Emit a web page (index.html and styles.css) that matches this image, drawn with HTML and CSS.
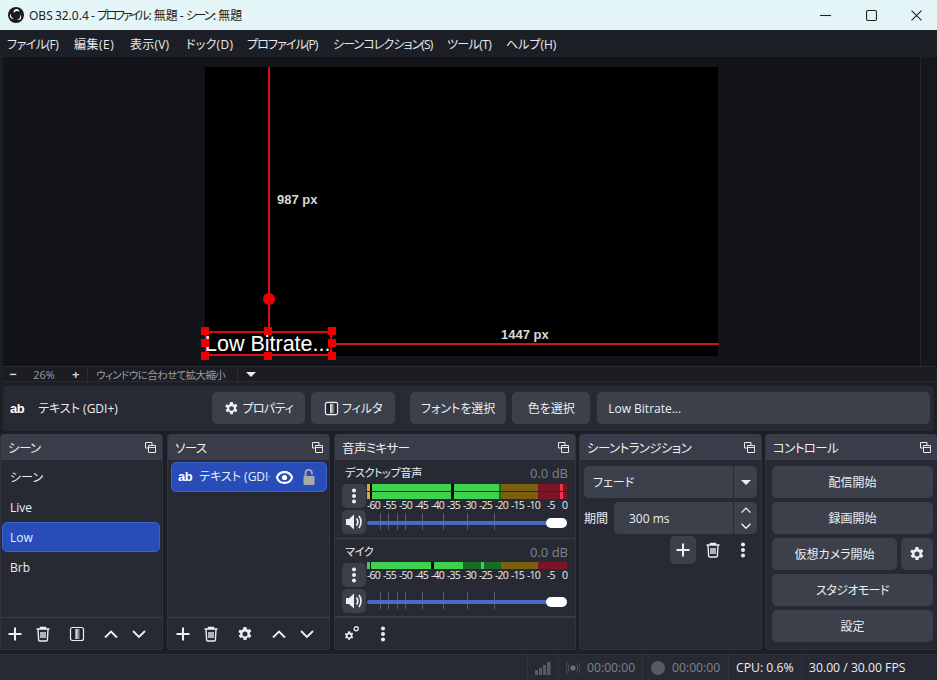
FILE: index.html
```html
<!DOCTYPE html>
<html lang="ja">
<head>
    <meta charset="UTF-8">
    <title>OBS 32.0.4</title>
    <link rel="stylesheet" href="styles.css">
</head>
<body>

<svg class="defs" width="0" height="0">
    <symbol id="i-plus" viewBox="0 0 16 16"><path d="M8 1.500v13M1.500 8h13" stroke="currentColor" stroke-width="2" fill="none"/></symbol>
    <symbol id="i-trash" viewBox="0 0 16 16"><path d="M1.500 3h13M5.500 3V1.500h5V3M3 3.500l.6 10.200c0 .8.6 1.300 1.300 1.300h6.200c.7 0 1.300-.5 1.300-1.300L13 3.500M6 6v6M8 6v6M10 6v6" stroke="currentColor" stroke-width="1.400" fill="none"/></symbol>
    <symbol id="i-up" viewBox="0 0 16 16"><path d="M2 11.500l6-6 6 6" stroke="currentColor" stroke-width="1.800" fill="none"/></symbol>
    <symbol id="i-down" viewBox="0 0 16 16"><path d="M2 5l6 6 6-6" stroke="currentColor" stroke-width="1.800" fill="none"/></symbol>
    <symbol id="i-gear" viewBox="0 0 16 16"><path fill-rule="evenodd" fill="currentColor" d="M6.600 1h2.800l.4 2 1.200.7 1.900-.7 1.400 2.400-1.500 1.400v1.400l1.500 1.400-1.400 2.400-1.900-.7-1.200.7-.4 2H6.600l-.4-2-1.200-.7-1.900.7-1.400-2.400 1.500-1.400V7.300L1.300 5.900l1.400-2.400 1.900.7 1.200-.7zM8 5.500a2.500 2.500 0 1 0 0 5 2.500 2.500 0 0 0 0-5z"/></symbol>
    <symbol id="i-dots" viewBox="0 0 16 16"><circle cx="8" cy="2.500" r="2" fill="currentColor"/><circle cx="8" cy="8" r="2" fill="currentColor"/><circle cx="8" cy="13.500" r="2" fill="currentColor"/></symbol>
    <symbol id="i-filter" viewBox="0 0 16 16"><defs><linearGradient id="fade"><stop offset="0" stop-color="#fff"/><stop offset="1" stop-color="#333"/></linearGradient></defs><rect x="1.500" y="1.500" width="13" height="13" rx="2" fill="none" stroke="currentColor" stroke-width="1.200"/><rect x="3" y="3" width="3.500" height="10" fill="#22242b"/><rect x="6.500" y="3" width="5" height="10" fill="url(#fade)"/><rect x="11.500" y="3" width="1.500" height="10" fill="#22242b"/></symbol>
    <symbol id="i-float" viewBox="0 0 11 11"><path d="M.5.5h6.500v2.500M.5.5v5.500H3M3.500 3.500h7v7h-7zM3.500 5.500h7" stroke="currentColor" fill="none"/></symbol>
    <symbol id="i-speaker" viewBox="0 0 18 18"><path d="M1 6h3l5-4.500v15L4 12H1z" fill="currentColor"/><path d="M11.500 5.500c1.500 2 1.500 5 0 7M14 3c2.600 3.500 2.600 8.500 0 12" stroke="currentColor" stroke-width="1.700" fill="none"/></symbol>
</svg>

<header class="titlebar">
    <svg class="obs-logo" viewBox="0 0 16 16" width="16" height="16">
        <circle cx="8" cy="8" r="8" fill="#1b1b1e"/>
        <path d="M8.300 1.900a3.500 3.500 0 0 1 3.300 3 4 4 0 0 0-5.900 1.100A3.500 3.500 0 0 1 8.300 1.900zM2.700 11a3.500 3.500 0 0 1 .3-4.500 4 4 0 0 0 3 5.200 3.500 3.500 0 0 1-3.300-.7zM13.200 10.900a3.500 3.500 0 0 1-4.200 2 4 4 0 0 0 3-5.300 3.500 3.500 0 0 1 1.200 3.300z" fill="#fff"/>
    </svg>
    <span class="title-text">OBS 32.0.4 - <span class="kana">プロファイル</span>: 無題 - <span class="kana">シーン</span>: 無題</span>
    <div class="win-buttons">
        <svg viewBox="0 0 10 10" width="11" height="11"><path d="M0 5h10" stroke="#222" fill="none"/></svg>
        <svg viewBox="0 0 10 10" width="11" height="11"><rect x=".5" y=".5" width="9" height="9" rx="1" stroke="#222" fill="none"/></svg>
        <svg viewBox="0 0 10 10" width="11" height="11"><path d="M.5.5l9 9M9.500.5l-9 9" stroke="#222" fill="none"/></svg>
    </div>
</header>

<nav class="menubar">
    <span class="m-file">ファイル(F)</span>
    <span class="m-edit">編集(E)</span>
    <span class="m-view">表示(V)</span>
    <span class="m-dock">ドック(D)</span>
    <span class="m-prof">プロファイル(P)</span>
    <span class="m-coll">シーンコレクション(S)</span>
    <span class="m-tool">ツール(T)</span>
    <span class="m-help">ヘルプ(H)</span>
</nav>

<section class="preview">
    <div class="canvas">
        <div class="guide-v"></div>
        <div class="guide-h"></div>
        <div class="rotate-handle"></div>
        <span class="measure measure-v">987 px</span>
        <span class="measure measure-h">1447 px</span>
        <div class="selection">
            <span class="source-text">Low Bitrate...</span>
            <i class="handle h-tl"></i><i class="handle h-tc"></i><i class="handle h-tr"></i>
            <i class="handle h-ml"></i><i class="handle h-mr"></i>
            <i class="handle h-bl"></i><i class="handle h-bc"></i><i class="handle h-br"></i>
        </div>
    </div>
    <div class="scroll-v"></div>
</section>

<div class="zoombar">
    <span class="zoom-btn">−</span>
    <span class="zoom-val">26%</span>
    <span class="zoom-btn zoom-plus">+</span>
    <span class="zoom-fit">ウィンドウに合わせて拡大縮小</span>
    <span class="zoom-arrow"></span>
</div>

<div class="contextbar">
    <span class="ab-icon">ab</span>
    <span class="context-name">テキスト (GDI+)</span>
    <button class="btn btn-props"><svg width="15" height="15"><use href="#i-gear"/></svg><span class="kana-soft">プロパティ</span></button>
    <button class="btn btn-filter"><svg width="15" height="15"><use href="#i-filter"/></svg>フィルタ</button>
    <button class="btn btn-font">フォントを選択</button>
    <button class="btn btn-color">色を選択</button>
    <div class="btn text-field">Low Bitrate...</div>
</div>

<main class="docks">
    <section class="dock dock-scenes">
        <div class="dock-title">シーン<svg width="11" height="11"><use href="#i-float"/></svg></div>
        <ul class="list">
            <li>シーン</li>
            <li>Live</li>
            <li class="selected">Low</li>
            <li>Brb</li>
        </ul>
        <div class="dock-tools">
            <svg width="16" height="16"><use href="#i-plus"/></svg>
            <svg width="16" height="16"><use href="#i-trash"/></svg>
            <svg width="16" height="16"><use href="#i-filter"/></svg>
            <svg width="16" height="16"><use href="#i-up"/></svg>
            <svg width="16" height="16"><use href="#i-down"/></svg>
        </div>
    </section>

    <section class="dock dock-sources">
        <div class="dock-title">ソース<svg width="11" height="11"><use href="#i-float"/></svg></div>
        <ul class="list">
            <li class="selected source-row">
                <span class="ab-icon">ab</span>
                <span class="source-name">テキスト (GDI+)</span>
                <svg class="eye" viewBox="0 0 18 14" width="17" height="13"><path d="M9 1.200C5 1.200 2 3.500.8 7 2 10.500 5 12.800 9 12.800s7-2.300 8.200-5.800C16 3.500 13 1.200 9 1.200z" fill="none" stroke="#fff" stroke-width="2.200"/><circle cx="9" cy="7" r="2.800" fill="#fff"/></svg>
                <svg class="lock" viewBox="0 0 12 16" width="12" height="16"><path d="M2.500 7V4a3.200 3.200 0 0 1 6.400 0v1.500" fill="none" stroke="#aaa" stroke-width="1.800"/><rect x="0.500" y="7" width="11" height="9" rx="1" fill="#aaa"/></svg>
            </li>
        </ul>
        <div class="dock-tools">
            <svg width="16" height="16"><use href="#i-plus"/></svg>
            <svg width="16" height="16"><use href="#i-trash"/></svg>
            <svg width="16" height="16"><use href="#i-gear"/></svg>
            <svg width="16" height="16"><use href="#i-up"/></svg>
            <svg width="16" height="16"><use href="#i-down"/></svg>
        </div>
    </section>

    <section class="dock dock-mixer">
        <div class="dock-title">音声ミキサー<svg width="11" height="11"><use href="#i-float"/></svg></div>
        <div class="mixer-strip">
            <div class="strip-head"><span>デスクトップ音声</span><span class="db">0.0 dB</span></div>
            <div class="strip-row">
                <span class="icon-btn"><svg width="16" height="16"><use href="#i-dots"/></svg></span>
                <div class="meter">
                    <div class="channel">
                        <i class="seg" style="width:3px;background:#e0a82e"></i><i class="seg" style="width:2px;background:#000"></i>
                        <i class="seg" style="width:79px;background:#3fd24e"></i><i class="seg" style="width:3px;background:#000"></i>
                        <i class="seg" style="width:45px;background:#3fd24e"></i><i class="seg" style="width:2px;background:#1a6b24"></i>
                        <i class="seg" style="width:37px;background:#7a6010"></i><i class="seg" style="width:22px;background:#7d1426"></i>
                        <i class="seg" style="width:3px;background:#e8384f"></i><i class="seg" style="width:4px;background:#7d1426"></i>
                    </div>
                    <div class="channel">
                        <i class="seg" style="width:3px;background:#e0a82e"></i><i class="seg" style="width:2px;background:#000"></i>
                        <i class="seg" style="width:79px;background:#3fd24e"></i><i class="seg" style="width:3px;background:#000"></i>
                        <i class="seg" style="width:45px;background:#3fd24e"></i><i class="seg" style="width:2px;background:#1a6b24"></i>
                        <i class="seg" style="width:37px;background:#7a6010"></i><i class="seg" style="width:22px;background:#7d1426"></i>
                        <i class="seg" style="width:3px;background:#e8384f"></i><i class="seg" style="width:4px;background:#7d1426"></i>
                    </div>
                    <div class="scale"><span>-60</span><span>-55</span><span>-50</span><span>-45</span><span>-40</span><span>-35</span><span>-30</span><span>-25</span><span>-20</span><span>-15</span><span>-10</span><span>-5</span><span>0</span></div>
                </div>
            </div>
            <div class="strip-row">
                <span class="icon-btn"><svg width="18" height="18"><use href="#i-speaker"/></svg></span>
                <div class="slider">
                    <i class="tick" style="left:13px"></i><i class="tick" style="left:21px"></i><i class="tick" style="left:30px"></i><i class="tick" style="left:38px"></i><i class="tick" style="left:55px"></i><i class="tick" style="left:76px"></i><i class="tick" style="left:100px"></i><i class="tick" style="left:127px"></i>
                    <div class="track"></div><div class="knob"></div>
                </div>
            </div>
        </div>
        <div class="mixer-strip mixer-strip-mic">
            <div class="strip-head"><span>マイク</span><span class="db">0.0 dB</span></div>
            <div class="strip-row">
                <span class="icon-btn"><svg width="16" height="16"><use href="#i-dots"/></svg></span>
                <div class="meter meter-mono">
                    <div class="channel">
                        <i class="seg" style="width:3px;background:#3fd24e"></i><i class="seg" style="width:1px;background:#000"></i>
                        <i class="seg" style="width:60px;background:#3fd24e"></i><i class="seg" style="width:3px;background:#000"></i>
                        <i class="seg" style="width:29px;background:#3fd24e"></i><i class="seg" style="width:18px;background:#1a6b24"></i>
                        <i class="seg" style="width:3px;background:#3fd24e"></i><i class="seg" style="width:17px;background:#1a6b24"></i>
                        <i class="seg" style="width:37px;background:#7a6010"></i><i class="seg" style="width:29px;background:#7d1426"></i>
                    </div>
                    <div class="scale"><span>-60</span><span>-55</span><span>-50</span><span>-45</span><span>-40</span><span>-35</span><span>-30</span><span>-25</span><span>-20</span><span>-15</span><span>-10</span><span>-5</span><span>0</span></div>
                </div>
            </div>
            <div class="strip-row">
                <span class="icon-btn"><svg width="18" height="18"><use href="#i-speaker"/></svg></span>
                <div class="slider">
                    <i class="tick" style="left:13px"></i><i class="tick" style="left:21px"></i><i class="tick" style="left:30px"></i><i class="tick" style="left:38px"></i><i class="tick" style="left:55px"></i><i class="tick" style="left:76px"></i><i class="tick" style="left:100px"></i><i class="tick" style="left:127px"></i>
                    <div class="track"></div><div class="knob"></div>
                </div>
            </div>
        </div>
        <div class="dock-tools mixer-tools">
            <svg viewBox="0 0 16 16" width="15" height="15"><use href="#i-gear" width="11" height="11" y="5"/><circle cx="13" cy="3" r="2.200" fill="none" stroke="currentColor" stroke-width="1.400"/></svg>
            <svg width="16" height="16"><use href="#i-dots"/></svg>
        </div>
    </section>

    <section class="dock dock-trans">
        <div class="dock-title">シーントランジション<svg width="11" height="11"><use href="#i-float"/></svg></div>
        <div class="trans-body">
            <div class="btn combo"><span>フェード</span><span class="combo-arrow"><i class="caret"></i></span></div>
            <div class="trans-row">
                <label>期間</label>
                <div class="btn spin">
                    <span>300 ms</span>
                    <span class="spin-arrows">
                        <svg width="12" height="12"><use href="#i-up"/></svg>
                        <svg width="12" height="12"><use href="#i-down"/></svg>
                    </span>
                </div>
            </div>
            <div class="trans-tools">
                <span class="btn plus-btn"><svg width="16" height="16"><use href="#i-plus"/></svg></span>
                <svg class="t-trash" width="16" height="16"><use href="#i-trash"/></svg>
                <svg class="t-dots" width="16" height="16"><use href="#i-dots"/></svg>
            </div>
        </div>
    </section>

    <section class="dock dock-controls">
        <div class="dock-title">コントロール<svg width="11" height="11"><use href="#i-float"/></svg></div>
        <div class="controls">
            <button class="btn">配信開始</button>
            <button class="btn">録画開始</button>
            <div class="controls-row">
                <button class="btn">仮想カメラ開始</button>
                <button class="btn cam-gear"><svg width="16" height="16"><use href="#i-gear"/></svg></button>
            </div>
            <button class="btn"><span class="kana-soft">スタジオモード</span></button>
            <button class="btn">設定</button>
        </div>
    </section>
</main>

<footer class="statusbar">
    <div class="stat stat-signal">
        <svg width="16" height="14" viewBox="0 0 16 14"><path fill="#565a66" d="M0 9h3v5H0zM4 7h3v7H4zM8 4h3v10H8zM12 1h3.500v13H12z"/></svg>
    </div>
    <div class="stat stat-stream dim">
        <svg width="14" height="12" viewBox="0 0 14 12"><circle cx="7" cy="6" r="2.500" fill="#6c707c"/><path d="M3.500 2.500a5 5 0 0 0 0 7M10.500 2.500a5 5 0 0 1 0 7M1.500 1a7.500 7.500 0 0 0 0 10M12.500 1a7.500 7.500 0 0 1 0 10" fill="none" stroke="#565a66"/></svg>
        00:00:00
    </div>
    <div class="stat stat-rec dim"><i class="rec-dot"></i>00:00:00</div>
    <div class="stat stat-cpu">CPU: 0.6%</div>
    <div class="stat stat-fps">30.00 / 30.00 FPS</div>
</footer>

</body>
</html>
```

FILE: styles.css
```css
* {
    box-sizing: border-box;
}
html, body {
    margin: 0;
    height: 680px;
    overflow: hidden;
}
body {
    width: 937px;
    background-color: #1d1f26;
    color: #eceef2;
    font-family: "Open Sans", "Noto Sans CJK JP", sans-serif;
    font-size: 12px;
    font-feature-settings: "palt";
}
.defs {
    position: absolute;
}
svg {
    display: block;
    flex: none;
}
.kana-soft {
    letter-spacing: -0.6px;
}

/* title bar */
.titlebar {
    height: 30px;
    background-color: #e4f5f8;
    color: #222;
    display: flex;
    align-items: center;
    padding-left: 8px;
    font-family: "Noto Sans", "Noto Sans CJK JP", sans-serif;
    font-size: 12px;
}
.title-text {
    margin-left: 5px;
    word-spacing: -1px;
}
.kana {
    letter-spacing: -2.3px;
    margin-right: 1px;
}
.win-buttons {
    margin-left: auto;
    display: flex;
    gap: 34.5px;
    padding-right: 15px;
}

/* menu */
.menubar {
    height: 27px;
    display: flex;
    align-items: center;
    padding-left: 7px;
    color: #e8eaee;
}
.menubar span {
    white-space: nowrap;
}
.m-file { width: 67px; letter-spacing: -0.5px; }
.m-edit { width: 56px; letter-spacing: 0.5px; }
.m-view { width: 56px; letter-spacing: 0.2px; }
.m-dock { width: 61px; letter-spacing: 0.3px; }
.m-prof { width: 86px; letter-spacing: -0.9px; }
.m-coll { width: 114px; letter-spacing: -0.9px; }
.m-tool { width: 59px; letter-spacing: -0.6px; }
.m-help { width: 60px; }

/* preview */
.preview {
    height: 309px;
    margin-left: 3px;
    background-color: #131419;
    display: flex;
    padding: 10px 0 9px 202px;
    position: relative;
}
.canvas {
    width: 513px;
    height: 289px;
    background-color: #000;
    position: relative;
}
.scroll-v {
    position: absolute;
    right: 1px;
    top: 0;
    bottom: 0;
    width: 16px;
    background-color: #16171c;
    border-left: 1px solid #23252c;
}
.guide-v {
    position: absolute;
    left: 63px;
    top: 0;
    width: 2px;
    height: 264px;
    background-color: #e00b0b;
}
.guide-h {
    position: absolute;
    left: 127px;
    top: 276px;
    width: 387px;
    height: 2px;
    background-color: #d01414;
}
.rotate-handle {
    position: absolute;
    left: 58px;
    top: 226px;
    width: 12px;
    height: 12px;
    border-radius: 50%;
    background-color: #ee0000;
}
.measure {
    position: absolute;
    color: #d8d8d8;
    font-family: "Liberation Sans", sans-serif;
    font-weight: bold;
    font-size: 13px;
    line-height: 14px;
}
.measure-v {
    left: 72px;
    top: 126px;
}
.measure-h {
    left: 296px;
    top: 261px;
}
.selection {
    position: absolute;
    left: 0;
    top: 264px;
    width: 127px;
    height: 25px;
    border: 2px solid #e00b0b;
}
.source-text {
    position: absolute;
    left: -2px;
    top: -1px;
    color: #fff;
    font-family: "Liberation Sans", sans-serif;
    font-size: 21.5px;
    line-height: 25px;
    white-space: nowrap;
}
.handle {
    position: absolute;
    width: 8px;
    height: 8px;
    background-color: #ee0000;
}
.h-tl { left: -6px; top: -6px; }
.h-tc { left: 57px; top: -6px; }
.h-tr { right: -6px; top: -6px; }
.h-ml { left: -6px; top: 6px; }
.h-mr { right: -6px; top: 6px; }
.h-bl { left: -6px; bottom: -6px; }
.h-bc { left: 57px; bottom: -6px; }
.h-br { right: -6px; bottom: -6px; }

/* zoom bar */
.zoombar {
    height: 16px;
    margin: 0 1px 0 3px;
    background-color: #1b1d23;
    border-top: 1px solid #2a2c34;
    border-bottom: 1px solid #2a2c34;
    display: flex;
    align-items: center;
    color: #9a9eaa;
    font-size: 11px;
}
.zoom-btn {
    width: 20px;
    text-align: center;
    color: #d5d7dd;
    font-size: 13px;
    font-weight: bold;
}
.zoom-val {
    width: 42px;
    text-align: center;
}
.zoom-plus {
    border-right: 1px solid #2a2c34;
    width: 23px;
    text-align: left;
    padding-left: 7px;
}
.zoom-fit {
    width: 150px;
    padding-left: 8px;
    white-space: nowrap;
    border-right: 1px solid #2a2c34;
    font-size: 10.5px;
    letter-spacing: -0.6px;
}
.zoom-arrow {
    margin-left: 8px;
    border-left: 5px solid transparent;
    border-right: 5px solid transparent;
    border-top: 5px solid #e8eaee;
}

/* context bar */
.contextbar {
    height: 45px;
    margin: 4px 3px 0;
    background-color: #272a33;
    border-radius: 4px;
    display: flex;
    align-items: center;
    position: relative;
    padding: 0 0 1px 7px;
}
.ab-icon {
    font-family: "Liberation Sans", sans-serif;
    font-weight: bold;
    font-size: 13px;
    letter-spacing: -0.5px;
    color: #fff;
}
.context-name {
    margin-left: 14px;
    width: 174px;
}
.btn {
    height: 32px;
    border: none;
    border-radius: 5px;
    background-color: #3c404b;
    color: #eceef2;
    font: inherit;
    font-feature-settings: inherit;
    display: flex;
    align-items: center;
    justify-content: center;
    padding: 0;
}
.btn-props {
    width: 93px;
    gap: 3px;
}
.btn-filter {
    width: 84px;
    margin-left: 6px;
    gap: 3px;
}
.btn-font {
    width: 96px;
    margin-left: 15px;
}
.btn-color {
    width: 78px;
    margin-left: 6px;
}
.text-field {
    width: 333px;
    margin-left: 7px;
    justify-content: flex-start;
    padding-left: 11px;
}

/* docks */
.docks {
    height: 216px;
    margin-top: 3px;
    display: flex;
}
.dock {
    background-color: #272a33;
    border: 1px solid #31343e;
    border-top: none;
    border-radius: 4px;
    display: flex;
    flex-direction: column;
    overflow: hidden;
}
.dock-scenes { width: 163px; margin-right: 4px; }
.dock-sources { width: 163px; margin-right: 4px; }
.dock-mixer { width: 242px; margin-right: 3px; }
.dock-trans { width: 183px; margin-right: 3px; }
.dock-controls { width: 172px; border-right: none; }
.dock-title {
    height: 26px;
    flex: none;
    background-color: #3a3d49;
    display: flex;
    align-items: center;
    justify-content: space-between;
    padding: 0 6px 0 7px;
    font-size: 12.5px;
    letter-spacing: -0.6px;
}
.dock-title svg {
    color: #e6e8ec;
}
.list {
    list-style: none;
    margin: 0;
    padding: 2px 2px 0 1px;
    flex: 1;
}
.list li {
    height: 30px;
    padding-left: 7px;
    border-radius: 5px;
    border: 1px solid transparent;
    line-height: 30px;
}
.list .selected {
    background-color: #284cb8;
    border-color: #3a63cf;
}
.list .source-row {
    display: flex;
    align-items: center;
    margin: 0 0 0 2px;
    padding-left: 6px;
}
.source-name {
    width: 71px;
    margin-left: 7px;
    overflow: hidden;
    white-space: nowrap;
}
.eye {
    margin-left: 6px;
}
.lock {
    margin-left: 10px;
}
.dock-tools {
    height: 32px;
    flex: none;
    border-top: 1px solid #3a3d48;
    display: flex;
    align-items: center;
    position: relative;
    padding-left: 6px;
    color: #eceef2;
}
.dock-sources .dock-tools {
    padding-left: 7px;
}
.dock-tools svg + svg {
    margin-left: 12px;
}
.dock-tools svg:nth-child(3) {
    margin-left: 18px;
}
.dock-tools svg:nth-child(4) {
    margin-left: 18px;
}
.dock-tools svg:nth-child(5) {
    margin-left: 12px;
}
.mixer-tools {
    height: 33px;
    border-top: 2px solid #3a3d48;
    padding-left: 9px;
}
.dock-tools.mixer-tools svg + svg {
    margin-left: 16px;
}

/* mixer */
.mixer-strip {
    height: 79px;
    padding: 5px 7px 0;
    border-bottom: 1px solid #3a3d48;
}
.mixer-strip-mic {
    border-bottom: none;
    flex: 1;
}
.strip-head {
    display: flex;
    justify-content: space-between;
    height: 19px;
    line-height: 16px;
    font-size: 11px;
    padding-left: 3px;
    letter-spacing: -0.3px;
}
.db {
    color: #7e828e;
    font-size: 13px;
    letter-spacing: 0;
}
.strip-row {
    display: flex;
    gap: 1px;
    height: 26px;
}
.icon-btn {
    width: 24px;
    height: 24px;
    background-color: #3c404b;
    border-radius: 5px;
    display: flex;
    align-items: center;
    justify-content: center;
    flex: none;
}
.meter {
    width: 200px;
}
.channel {
    display: flex;
    height: 7px;
    margin-bottom: 1px;
}
.meter-mono .channel {
    margin-top: -1px;
}
.seg {
    display: block;
    height: 100%;
}
.scale {
    display: flex;
    font-size: 10.5px;
    letter-spacing: -0.8px;
    line-height: 11px;
    color: #eceef2;
}
.scale span {
    width: 16px;
    flex: none;
}
.scale span:nth-child(11) {
    width: 20px;
}
.scale span:nth-child(12) {
    width: 15px;
}
.slider {
    width: 200px;
    height: 24px;
    position: relative;
}
.tick {
    position: absolute;
    top: 3px;
    width: 1px;
    height: 17px;
    background-color: #5a5e6b;
}
.track {
    position: absolute;
    left: 0;
    right: 10px;
    top: 11px;
    height: 4px;
    border-radius: 2px;
    background-color: #4a68c8;
}
.knob {
    position: absolute;
    right: 0;
    top: 8px;
    width: 21px;
    height: 10px;
    border-radius: 5px;
    background-color: #fff;
}

/* transitions */
.trans-body {
    padding: 6px 4px 0;
}
.combo {
    justify-content: space-between;
    padding-left: 9px;
}
.combo-arrow {
    width: 24px;
    height: 32px;
    border-left: 1px solid #272a33;
    display: flex;
    align-items: center;
    justify-content: center;
}
.caret {
    border-left: 5px solid transparent;
    border-right: 5px solid transparent;
    border-top: 5px solid #eceef2;
}
.trans-row {
    display: flex;
    align-items: center;
    margin-top: 4px;
}
.trans-row label {
    width: 30px;
}
.spin {
    flex: 1;
    justify-content: space-between;
    padding-left: 15px;
}
.spin-arrows {
    width: 24px;
    height: 32px;
    border-left: 1px solid #272a33;
    display: flex;
    flex-direction: column;
    align-items: center;
    justify-content: space-around;
}
.trans-tools {
    display: flex;
    align-items: center;
    margin-top: 2px;
    padding-left: 86px;
}
.plus-btn {
    width: 26px;
    height: 28px;
}
.t-trash {
    margin-left: 9px;
}
.t-dots {
    margin-left: 14px;
}

/* controls */
.controls {
    padding: 6px 4px 0 6px;
    display: flex;
    flex-direction: column;
    gap: 4px;
}
.controls-row {
    display: flex;
    gap: 4px;
}
.controls-row .btn:first-child {
    flex: 1;
}
.cam-gear {
    width: 32px;
}

/* status bar */
.statusbar {
    height: 26px;
    margin-top: 4px;
    background-color: #272a33;
    border-top: 1px solid #31343e;
    display: flex;
    justify-content: flex-end;
    font-size: 12.2px;
}
.stat {
    height: 100%;
    border-left: 1px solid #31343e;
    display: flex;
    align-items: center;
    padding-left: 7px;
    white-space: nowrap;
}
.stat-signal { width: 31px; }
.stat-stream { width: 84px; gap: 7px; }
.stat-rec { width: 86px; gap: 7px; padding-left: 8px; }
.stat-cpu { width: 73px; }
.stat-fps { width: 136px; }
.dim {
    color: #7e828e;
}
.rec-dot {
    width: 14px;
    height: 14px;
    border-radius: 50%;
    background-color: #565a66;
}
```
